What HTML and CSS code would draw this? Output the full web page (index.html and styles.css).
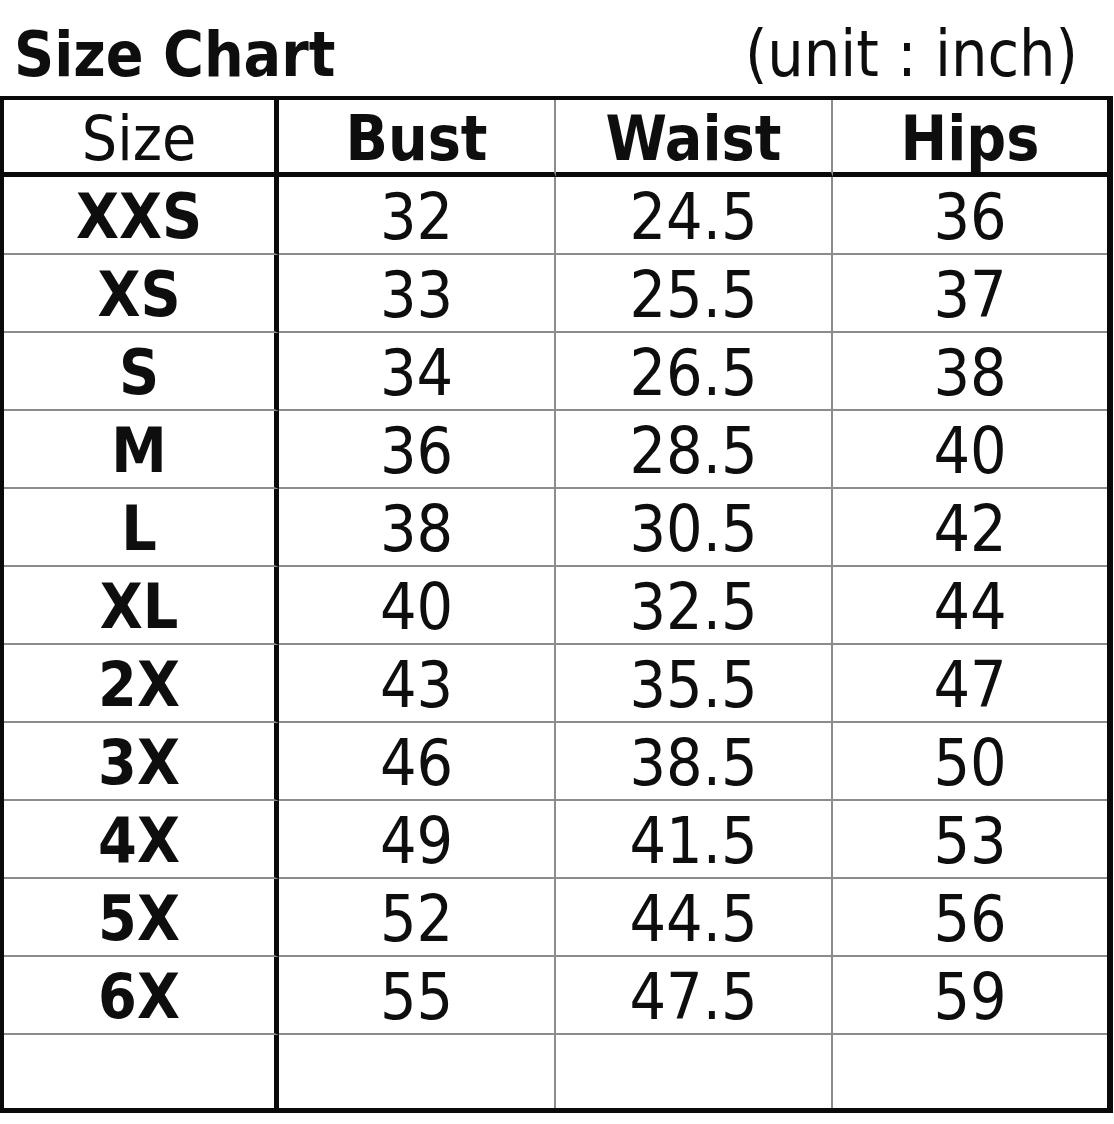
FILE: index.html
```html
<!DOCTYPE html>
<html lang="en">
<head>
<meta charset="utf-8">
<title>Size Chart</title>
<link rel="stylesheet" href="styles.css">
</head>
<body>
<div class="page">
  <div class="title-row">
    <h1 class="title">Size Chart</h1>
    <span class="unit">(unit : inch)</span>
  </div>
  <div class="chart">
    <div class="cell head c1 first-col">Size</div>
    <div class="cell head c2 bold">Bust</div>
    <div class="cell head c3 bold">Waist</div>
    <div class="cell head c4 bold">Hips</div>

    <div class="cell c1 bold">XXS</div><div class="cell c2">32</div><div class="cell c3">24.5</div><div class="cell c4">36</div>
    <div class="cell c1 bold">XS</div><div class="cell c2">33</div><div class="cell c3">25.5</div><div class="cell c4">37</div>
    <div class="cell c1 bold">S</div><div class="cell c2">34</div><div class="cell c3">26.5</div><div class="cell c4">38</div>
    <div class="cell c1 bold">M</div><div class="cell c2">36</div><div class="cell c3">28.5</div><div class="cell c4">40</div>
    <div class="cell c1 bold">L</div><div class="cell c2">38</div><div class="cell c3">30.5</div><div class="cell c4">42</div>
    <div class="cell c1 bold">XL</div><div class="cell c2">40</div><div class="cell c3">32.5</div><div class="cell c4">44</div>
    <div class="cell c1 bold">2X</div><div class="cell c2">43</div><div class="cell c3">35.5</div><div class="cell c4">47</div>
    <div class="cell c1 bold">3X</div><div class="cell c2">46</div><div class="cell c3">38.5</div><div class="cell c4">50</div>
    <div class="cell c1 bold">4X</div><div class="cell c2">49</div><div class="cell c3">41.5</div><div class="cell c4">53</div>
    <div class="cell c1 bold">5X</div><div class="cell c2">52</div><div class="cell c3">44.5</div><div class="cell c4">56</div>
    <div class="cell c1 bold">6X</div><div class="cell c2">55</div><div class="cell c3">47.5</div><div class="cell c4">59</div>

    <div class="cell c1 last"></div><div class="cell c2 last"></div><div class="cell c3 last"></div><div class="cell c4 last"></div>
  </div>
</div>
</body>
</html>
```
FILE: styles.css
```css
html, body {
  margin: 0;
  padding: 0;
  background: #ffffff;
}

.page {
  width: 1113px;
  font-family: "DejaVu Sans Condensed", "DejaVu Sans", sans-serif;
  color: #0e0e0e;
}

.title-row {
  height: 96px;
  box-sizing: border-box;
  display: flex;
  justify-content: space-between;
  align-items: flex-end;
  padding: 0 35px 10px 14px;
}

.title {
  margin: 0;
  font-size: 62px;
  font-weight: bold;
  line-height: 1;
}

.unit {
  font-size: 64px;
  line-height: 1;
  font-weight: normal;
}

.chart {
  display: grid;
  grid-template-columns: 275px 277px 277px 274px;
  grid-template-rows: 77px repeat(11, 78px) 73px;
  border-top: 4px solid #0a0a0a;
  border-left: 4px solid #0a0a0a;
  border-right: 6px solid #0a0a0a;
  border-bottom: 5px solid #0a0a0a;
  width: 1103px;
}

.cell {
  display: flex;
  align-items: center;
  justify-content: center;
  font-size: 64px;
  line-height: 1;
  border-bottom: 2px solid #8c8c8c;
  padding-top: 3px;
}

.cell.bold {
  font-weight: bold;
  font-size: 62px;
}

.c1 {
  border-right: 5px solid #0a0a0a;
}

.c2, .c3 {
  border-right: 2px solid #8c8c8c;
}

.head {
  border-bottom: 5px solid #0a0a0a;
  padding-top: 5px;
}

.head.first-col {
  font-size: 62px;
}

.last {
  border-bottom: none;
}
```
